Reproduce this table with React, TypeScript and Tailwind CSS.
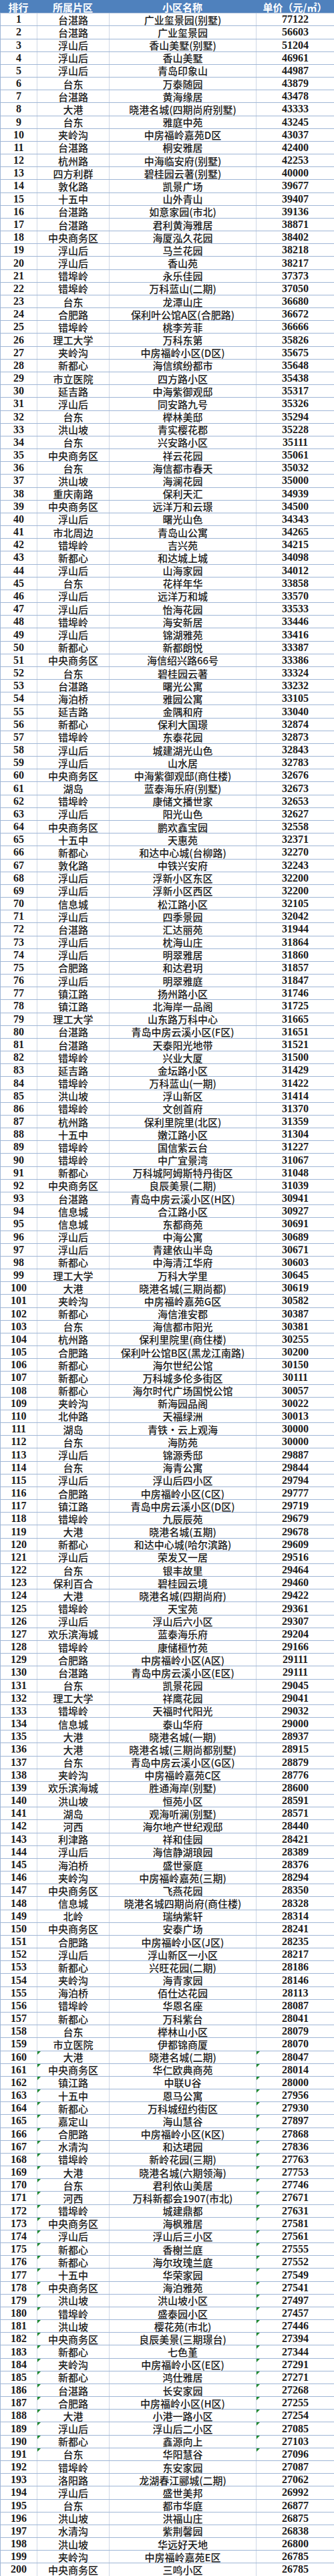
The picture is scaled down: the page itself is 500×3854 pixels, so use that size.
const rows = `台湛路|广业玺景园(别墅)|77122
台湛路|广业玺景园|56603
浮山后|香山美墅(别墅)|51204
浮山后|香山美墅|46961
浮山后|青岛印象山|44987
台东|万泰随园|43879
台湛路|黄海缘居|43478
大港|晓港名城(四期尚府别墅)|43333
台东|雅庭中苑|43245
夹岭沟|中房福岭嘉苑D区|43037
台湛路|桐安雅居|42400
杭州路|中海临安府(别墅)|42253
四方利群|碧桂园云著(别墅)|40000
敦化路|凯景广场|39677
十五中|山外青山|39407
台湛路|如意家园(市北)|39136
台湛路|君利黄海雅居|38871
中央商务区|海厦泓久花园|38402
浮山后|马兰花园|38218
浮山后|香山苑|38217
错埠岭|永乐佳园|37373
错埠岭|万科蓝山(二期)|37050
台东|龙潭山庄|36680
合肥路|保利叶公馆A区(合肥路)|36672
错埠岭|桃李芳菲|36666
理工大学|万科东第|35826
夹岭沟|中房福岭小区(D区)|35675
新都心|海信缤纷都市|35648
市立医院|四方路小区|35438
延吉路|中海紫御观邸|35317
浮山后|同安路九号|35326
台东|榉林美邸|35294
洪山坡|青实樱花郡|35228
台东|兴安路小区|35111
中央商务区|祥云花园|35061
台东|海信都市春天|35032
洪山坡|海澜花园|35000
重庆南路|保利天汇|34939
中央商务区|远洋万和云璟|34500
浮山后|曙光山色|34343
市北周边|青岛山公寓|34265
错埠岭|吉兴苑|34215
新都心|和达城上城|34098
浮山后|山海家园|34012
台东|花样年华|33858
浮山后|远洋万和城|33570
浮山后|怡海花园|33533
错埠岭|海安新居|33446
浮山后|锦湖雅苑|33416
新都心|新都朗悦|33387
中央商务区|海信绍兴路66号|33386
台东|碧桂园云著|33324
台湛路|曙光公寓|33232
海泊桥|雅园公寓|33105
延吉路|金隅和府|33040
新都心|保利大国璟|32874
错埠岭|东泰花园|32873
浮山后|城建湖光山色|32843
浮山后|山水居|32783
中央商务区|中海紫御观邸(商住楼)|32676
湖岛|蓝泰海乐府(别墅)|32673
错埠岭|康储文播世家|32653
浮山后|阳光山色|32627
中央商务区|鹏欢鑫宝园|32558
十五中|天惠苑|32371
新都心|和达中心城(台柳路)|32270
敦化路|中铁兴安府|32243
浮山后|浮新小区东区|32200
浮山后|浮新小区西区|32200
信息城|松江路小区|32105
浮山后|四季景园|32042
台湛路|汇达丽苑|31944
浮山后|枕海山庄|31864
浮山后|明翠雅居|31860
合肥路|和达君玥|31857
浮山后|明翠雅庭|31847
镇江路|扬州路小区|31746
镇江路|北海岸一品阁|31725
理工大学|山东路万科中心|31665
台湛路|青岛中房云溪小区(F区)|31651
台湛路|天泰阳光地带|31521
错埠岭|兴业大厦|31500
延吉路|金坛路小区|31429
错埠岭|万科蓝山(一期)|31422
洪山坡|浮山新区|31414
错埠岭|文创首府|31370
杭州路|保利里院里(北区)|31359
十五中|嫩江路小区|31304
错埠岭|国信紫云台|31227
错埠岭|中广宜景湾|31067
新都心|万科城阿姆斯特丹街区|31048
中央商务区|良辰美景(二期)|31039
台湛路|青岛中房云溪小区(H区)|30941
信息城|合江路小区|30927
信息城|东都商苑|30691
浮山后|中海公寓|30689
浮山后|青建依山半岛|30671
新都心|中海清江华府|30603
理工大学|万科大学里|30645
大港|晓港名城(三期尚都)|30619
夹岭沟|中房福岭嘉苑G区|30582
新都心|海信淮安郡|30387
台东|海信都市阳光|30381
杭州路|保利里院里(商住楼)|30255
合肥路|保利叶公馆B区(黑龙江南路)|30200
新都心|海尔世纪公馆|30150
新都心|万科城多伦多街区|30111
新都心|海尔时代广场国悦公馆|30057
夹岭沟|新海园品阁|30022
北仲路|天福绿洲|30013
湖岛|青铁·云上观海|30000
台东|海防苑|30000
浮山后|锦源秀邸|29887
台东|海青公寓|29844
浮山后|浮山后四小区|29794
合肥路|中房福岭小区(C区)|29777
镇江路|青岛中房云溪小区(D区)|29719
错埠岭|九辰辰苑|29679
大港|晓港名城(五期)|29678
新都心|和达中心城(哈尔滨路)|29609
浮山后|荣发又一居|29516
台东|银丰故里|29464
保利百合|碧桂园云境|29460
大港|晓港名城(四期尚府)|29422
错埠岭|天宝苑|29361
浮山后|浮山后六小区|29307
欢乐滨海城|蓝泰海乐府|29204
错埠岭|康储桓竹苑|29166
合肥路|中房福岭小区(A区)|29111
台湛路|青岛中房云溪小区(E区)|29111
台东|凯景花园|29045
理工大学|祥鹰花园|29041
错埠岭|天福时代阳光|29032
信息城|泰山华府|29000
大港|晓港名城(一期)|28937
大港|晓港名城(三期尚都别墅)|28915
台东|青岛中房云溪小区(G区)|28879
夹岭沟|中房福岭嘉苑C区|28776
欢乐滨海城|胜通海岸(别墅)|28600
洪山坡|恒苑小区|28591
湖岛|观海听澜(别墅)|28571
河西|海尔地产世纪观邸|28440
利津路|祥和佳园|28421
浮山后|海信静湖琅园|28389
海泊桥|盛世豪庭|28376
夹岭沟|中房福岭嘉苑(三期)|28294
中央商务区|飞燕花园|28350
信息城|晓港名城四期尚府(商住楼)|28328
北岭|瑞纳紫轩|28314
中央商务区|安泰广场|28241
合肥路|中房福岭小区(J区)|28235
浮山后|浮山新区一小区|28217
新都心|兴旺花园(二期)|28186
夹岭沟|海青家园|28146
海泊桥|佰仕达花园|28113
错埠岭|华恩名座|28087
新都心|万科紫台|28041
台东|榉林山小区|28079
市立医院|伊都锦商厦|28070
大港|晓港名城(二期)|28047
中央商务区|华仁欧典商苑|28014
镇江路|中联U谷|28000
十五中|恩马公寓|27956
新都心|万科城纽约街区|27930
嘉定山|海山慧谷|27897
合肥路|中房福岭小区(K区)|27868
水清沟|和达珺园|27836
错埠岭|新岭花园(三期)|27763
大港|晓港名城(六期领海)|27753
台东|君利依山美居|27746
河西|万科新都会1907(市北)|27671
错埠岭|城建鼎都|27631
中央商务区|海枫雅居|27581
浮山后|浮山后三小区|27561
新都心|香榭兰庭|27555
新都心|海尔玫瑰兰庭|27552
十五中|华荣家园|27549
中央商务区|海泊雅苑|27541
洪山坡|洪山坡小区|27497
错埠岭|盛泰园小区|27457
洪山坡|樱花苑(市北)|27446
中央商务区|良辰美景(三期璟台)|27394
新都心|七色堇|27344
夹岭沟|中房福岭小区(E区)|27291
新都心|鸿仕雅居|27271
台湛路|长安家园|27268
合肥路|中房福岭小区(H区)|27255
大港|小港一路小区|27254
浮山后|浮山后二小区|27085
新都心|鑫源向上|27103
台东|华阳慧谷|27096
错埠岭|东安家园|27087
洛阳路|龙湖春江郦城(二期)|27062
浮山后|盛世美邦|26992
台东|都市华庭|26877
洪山坡|洪福山庄|26875
水清沟|紫荆馨园|26838
洪山坡|华远好天地|26800
夹岭沟|中房福岭嘉苑E区|26785
中央商务区|三鸣小区|26785`
  .split("\n")
  .map((line) => line.split("|"));

const cjk = "font-['Noto_Sans_CJK_SC',sans-serif]";
const num = "font-['Liberation_Serif','Noto_Sans_CJK_SC',serif]";

// little green "number stored as text" corner
function Flag() {
  return (
    <span className="absolute left-0 top-0 h-0 w-0 border-t-[5px] border-r-[5px] border-t-[#1e8a2e] border-r-transparent" />
  );
}

export default function App() {
  return (
    <div className="w-[500px] bg-white text-[#1a1a1a]">
      <div className="grid h-[19.174px] grid-cols-[55px_108px_220px_117px] items-center bg-[#4f81bd] text-[15px] font-bold text-white">
        <div className={`text-center ${cjk}`}>排行</div>
        <div className={`text-center ${cjk}`}>所属片区</div>
        <div className={`text-center ${cjk}`}>小区名称</div>
        <div className={`text-center ${cjk}`}>单价（元/㎡）</div>
      </div>
      {rows.map(([area, name, price], i) => {
        const rank = i + 1;
        const flagged = rank >= 160 && rank <= 191;
        return (
          <div
            key={rank}
            className="grid h-[19.174px] grid-cols-[54px_108px_220px_117px] border-t border-l border-[#9fb6d6] leading-none"
          >
            <div className={`flex items-center justify-center text-[16px] font-bold ${num}`}>{rank}</div>
            <div className={`relative flex items-center justify-center border-l border-[#cfd8e6] text-[15px] font-medium ${cjk}`}>
              {flagged && <Flag />}
              {area}
            </div>
            <div className={`flex items-center justify-center border-l border-[#cfd8e6] text-[15px] font-medium ${cjk}`}>
              {name}
            </div>
            <div className={`relative flex items-center justify-center border-l border-[#cfd8e6] text-[16px] font-bold ${num}`}>
              {flagged && <Flag />}
              {price}
            </div>
          </div>
        );
      })}
    </div>
  );
}
